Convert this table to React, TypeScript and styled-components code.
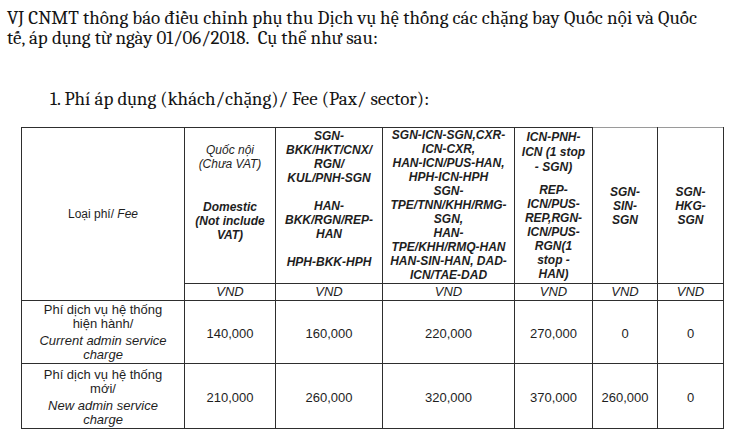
import React from 'react'
import styled, { createGlobalStyle } from 'styled-components'

const GlobalStyle = createGlobalStyle`
  html, body {
    margin: 0;
    padding: 0;
    background: #ffffff;
  }
`

const Page = styled.div`
  width: 742px;
  height: 448px;
  overflow: hidden;
  padding: 8px 0 0 7px;
  box-sizing: border-box;
  background: #ffffff;
`

const Intro = styled.div`
  font-family: Cambria, 'Liberation Serif', serif;
  font-size: 19px;
  line-height: 20px;
  color: #141414;
`

const IntroLine = styled.div`
  white-space: nowrap;
`

const SectionTitle = styled.div`
  font-family: Cambria, 'Liberation Serif', serif;
  font-size: 19px;
  line-height: 20px;
  color: #141414;
  margin: 41px 0 0 43px;
  white-space: nowrap;
`

const FeeTable = styled.table`
  margin: 18px 0 0 14px;
  width: 703px;
  border-collapse: collapse;
  table-layout: fixed;
  font-family: Arial, 'Liberation Sans', sans-serif;
  color: #1e1e1e;

  td, th {
    border: 1px solid #2e2e2e;
    padding: 0 2px;
    text-align: center;
  }
`

const HeadCell = styled.th<{ $valign?: 'top' | 'middle'; $pt?: number; $light?: boolean }>`
  height: 153px;
  vertical-align: ${(p) => p.$valign || 'top'};
  padding-top: ${(p) => p.$pt || 0}px !important;
  font-size: 12px;
  line-height: 14px;
  font-weight: bold;
  font-style: italic;
  white-space: nowrap;
  ${(p) => p.$light && 'border-top-color: #9a9a9a !important;'}
`

const LabelHead = styled.th`
  vertical-align: middle;
  font-size: 12px;
  font-weight: normal;
  white-space: nowrap;

  em {
    font-style: italic;
  }
`

const UnitCell = styled.td`
  height: 16px;
  font-size: 13px;
  line-height: 16px;
  font-style: italic;
`

const LabelCell = styled.td<{ $pt: number }>`
  vertical-align: top;
  padding-top: ${(p) => p.$pt}px !important;
  font-size: 13px;
  line-height: 14px;
  white-space: nowrap;
`

const EnLabel = styled.div<{ $gap: number }>`
  font-style: italic;
  margin-top: ${(p) => p.$gap}px;
`

const ValueCell = styled.td<{ $h: number; $light?: boolean }>`
  height: ${(p) => p.$h}px;
  font-size: 13px;
  vertical-align: middle;
  padding-top: 2px !important;
  ${(p) => p.$light && 'border-left-color: #a0a0a0 !important;'}
`

const Blank = styled.div<{ $h?: number }>`
  height: ${(p) => p.$h ?? 14}px;
`

const StopGroup = styled.div`
  line-height: 15px;
`

const Normal = styled.span`
  font-weight: normal;
`

const lines = (rows: string[]) =>
  rows.map((r, i) => (r === '' ? <Blank key={i} /> : <div key={i}>{r}</div>))

const colWidths = [163, 91, 107, 132, 78, 65, 66]

const rows = [
  {
    vi: ['Phí dịch vụ hệ thống', 'hiện hành/'],
    en: ['Current admin service', 'charge'],
    pt: 2,
    gap: 3,
    h: 60,
    values: ['140,000', '160,000', '220,000', '270,000', '0', '0'],
  },
  {
    vi: ['Phí dịch vụ hệ thống', 'mới/'],
    en: ['New admin service', 'charge'],
    pt: 4,
    gap: 3,
    h: 62,
    values: ['210,000', '260,000', '320,000', '370,000', '260,000', '0'],
  },
]

const App: React.FC = () => {
  return (
    <>
      <GlobalStyle />
      <Page>
        <Intro>
          <IntroLine>
            VJ CNMT thông báo điều chỉnh phụ thu Dịch vụ hệ thống các chặng bay Quốc nội và Quốc
          </IntroLine>
          <IntroLine>tế, áp dụng từ ngày 01/06/2018.&nbsp; Cụ thể như sau:</IntroLine>
        </Intro>

        <SectionTitle>1. Phí áp dụng (khách/chặng)/ Fee (Pax/ sector):</SectionTitle>

        <FeeTable>
          <colgroup>
            {colWidths.map((w, i) => (
              <col key={i} style={{ width: w }} />
            ))}
          </colgroup>
          <tbody>
            <tr>
              <LabelHead rowSpan={2}>
                Loại phí/ <em>Fee</em>
              </LabelHead>
              <HeadCell $pt={1}>
                <Blank />
                <div>
                  <Normal>Quốc nội</Normal>
                </div>
                <div>
                  <Normal>(Chưa VAT)</Normal>
                </div>
                <Blank $h={29} />
                {lines(['Domestic', '(Not include', 'VAT)'])}
              </HeadCell>
              <HeadCell $pt={1}>
                {lines([
                  'SGN-',
                  'BKK/HKT/CNX/',
                  'RGN/',
                  'KUL/PNH-SGN',
                  '',
                  'HAN-',
                  'BKK/RGN/REP-',
                  'HAN',
                  '',
                  'HPH-BKK-HPH',
                ])}
              </HeadCell>
              <HeadCell>
                {lines([
                  'SGN-ICN-SGN,CXR-',
                  'ICN-CXR,',
                  'HAN-ICN/PUS-HAN,',
                  'HPH-ICN-HPH',
                  'SGN-',
                  'TPE/TNN/KHH/RMG-',
                  'SGN,',
                  'HAN-',
                  'TPE/KHH/RMQ-HAN',
                  'HAN-SIN-HAN, DAD-',
                  'ICN/TAE-DAD',
                ])}
              </HeadCell>
              <HeadCell $pt={2}>
                <StopGroup>{lines(['ICN-PNH-', 'ICN (1 stop', '- SGN)'])}</StopGroup>
                <Blank $h={8} />
                {lines(['REP-', 'ICN/PUS-', 'REP,RGN-', 'ICN/PUS-', 'RGN(1', 'stop -', 'HAN)'])}
              </HeadCell>
              <HeadCell $valign="middle" $light>
                {lines(['SGN-', 'SIN-', 'SGN'])}
              </HeadCell>
              <HeadCell $valign="middle" $light>
                {lines(['SGN-', 'HKG-', 'SGN'])}
              </HeadCell>
            </tr>
            <tr>
              {colWidths.slice(1).map((_, i) => (
                <UnitCell key={i}>VND</UnitCell>
              ))}
            </tr>
            {rows.map((r, ri) => (
              <tr key={ri}>
                <LabelCell $pt={r.pt}>
                  {r.vi.map((t, i) => (
                    <div key={i}>{t}</div>
                  ))}
                  <EnLabel $gap={r.gap}>
                    {r.en.map((t, i) => (
                      <div key={i}>{t}</div>
                    ))}
                  </EnLabel>
                </LabelCell>
                {r.values.map((v, vi) => (
                  <ValueCell key={vi} $h={r.h} $light={vi === 5}>
                    {v}
                  </ValueCell>
                ))}
              </tr>
            ))}
          </tbody>
        </FeeTable>
      </Page>
    </>
  )
}

export default App
